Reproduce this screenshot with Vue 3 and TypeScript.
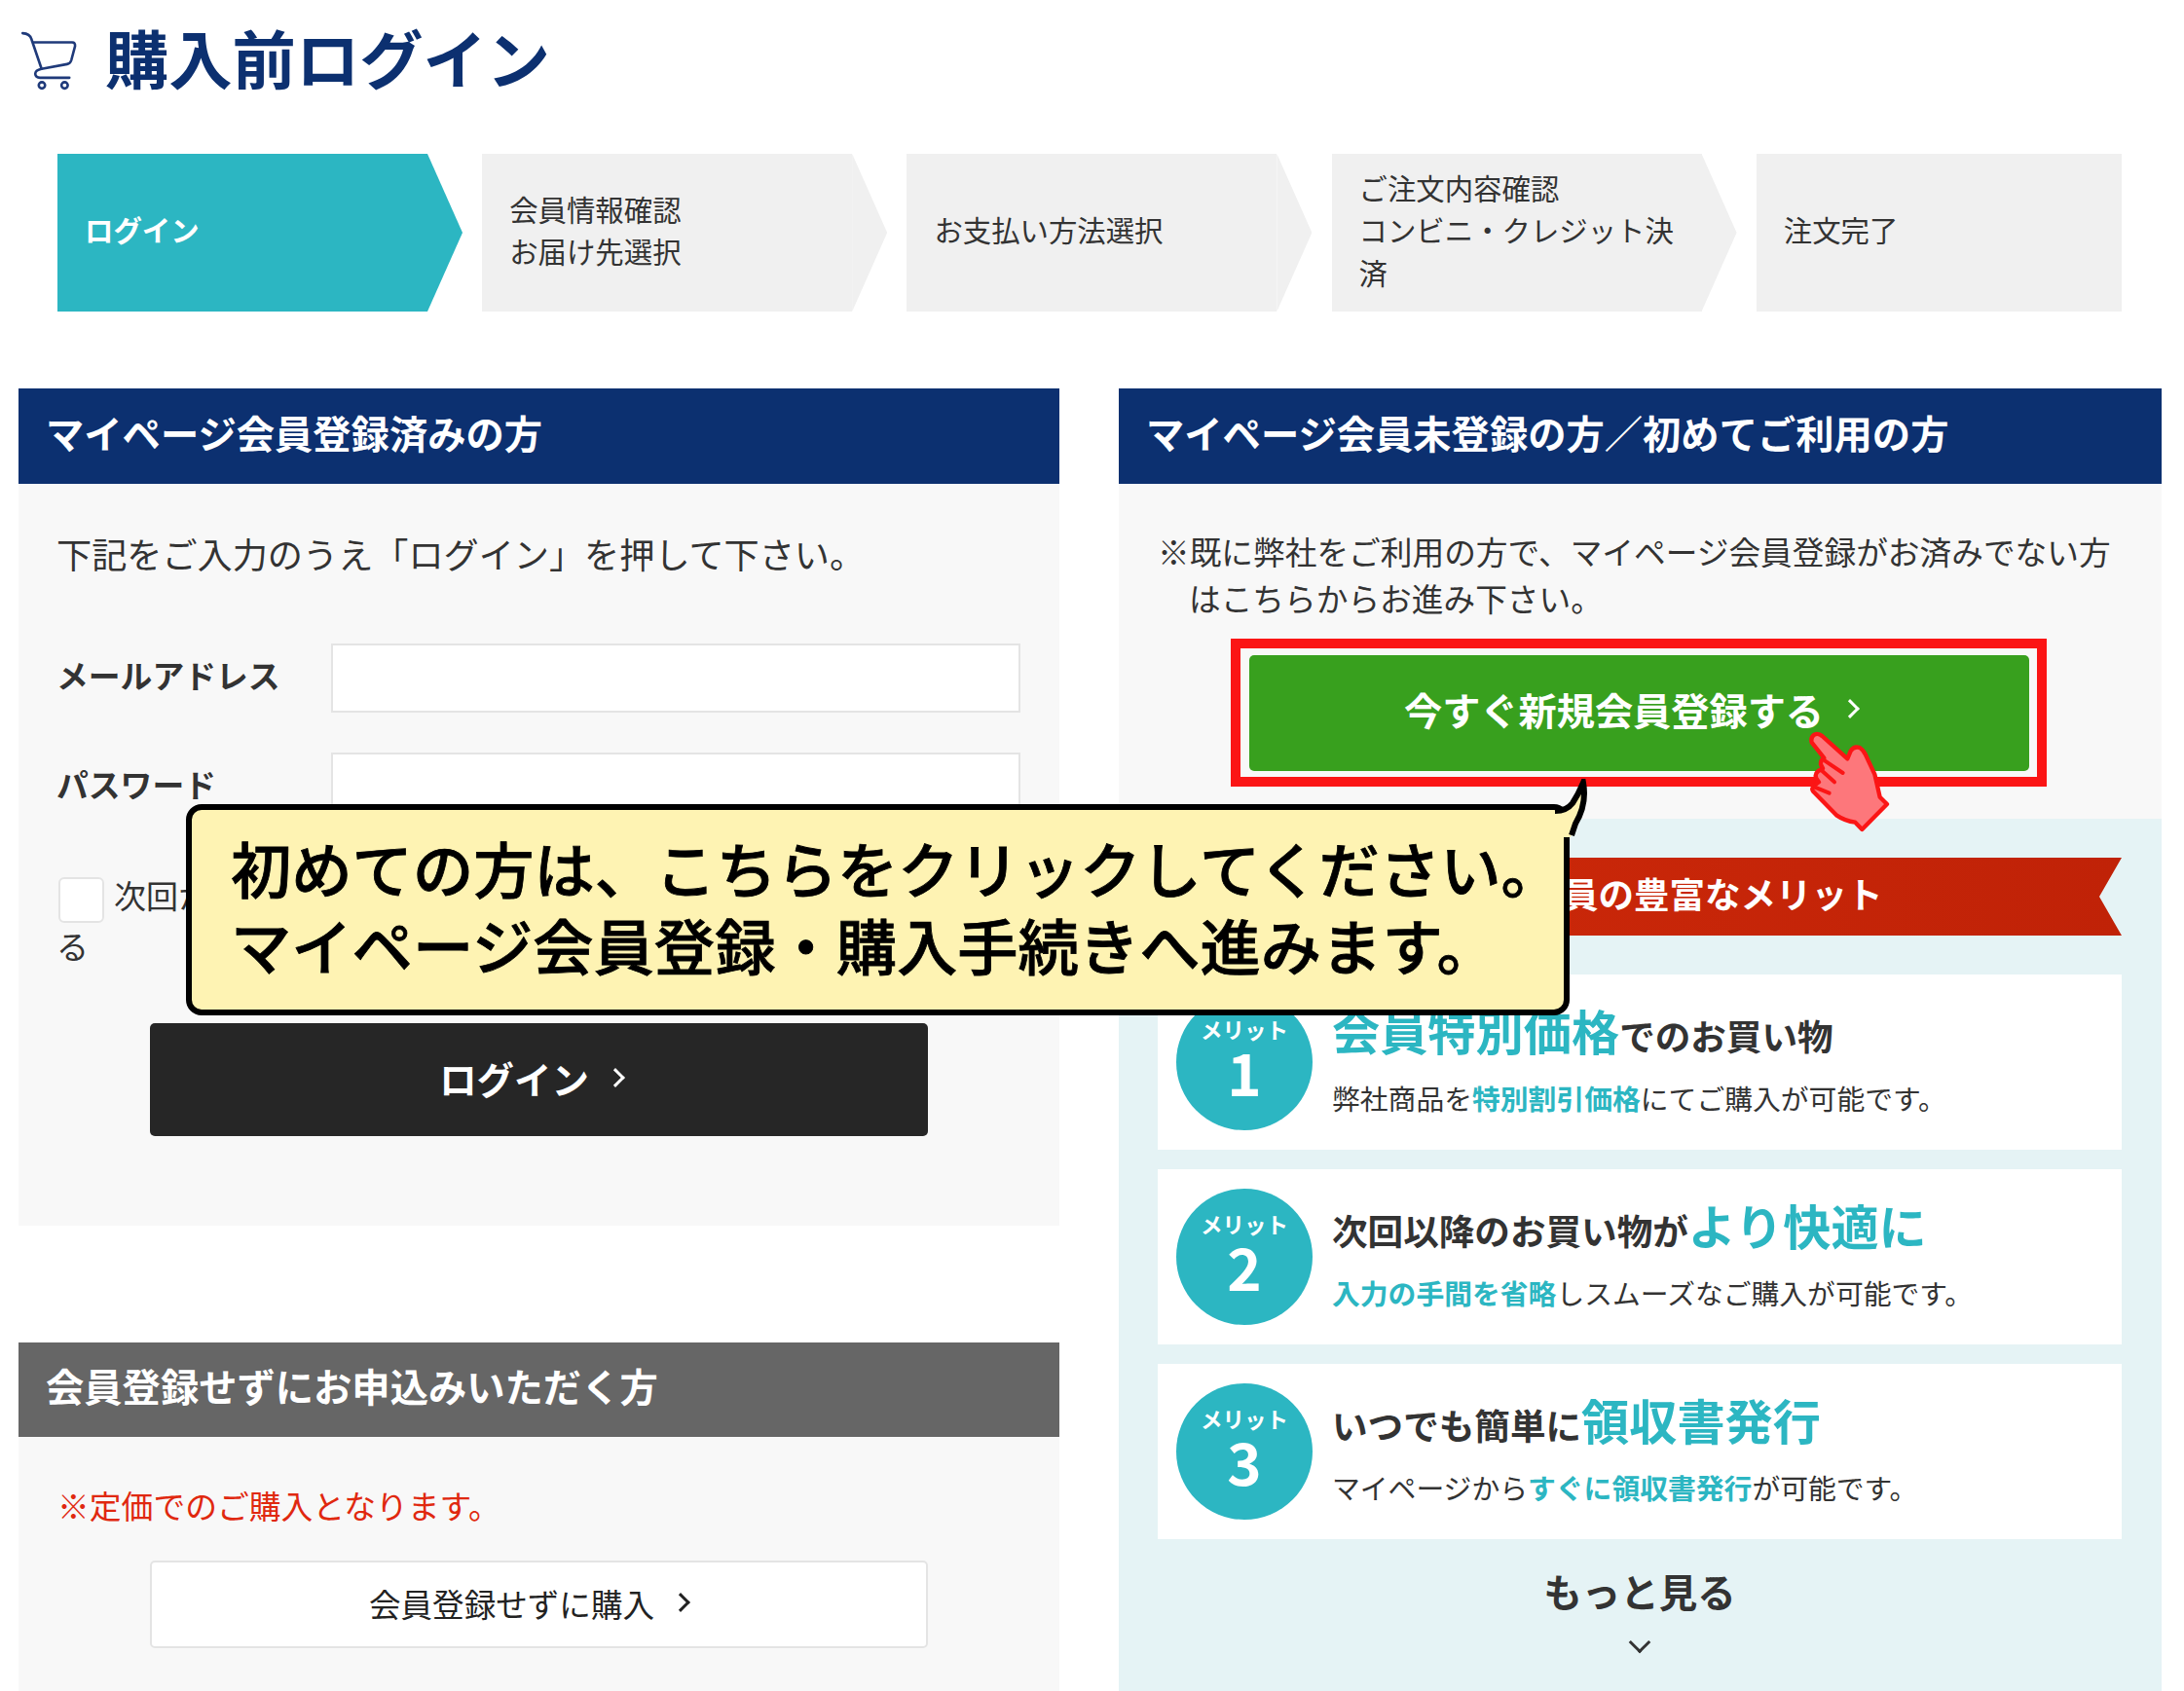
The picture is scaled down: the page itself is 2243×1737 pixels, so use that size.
<template>
  <div class="page">
    <h1 class="page-title">
      <svg class="cart" viewBox="55 60 185 190" width="60" height="62" fill="none" stroke="#1f3a7a" stroke-width="8" stroke-linecap="round" stroke-linejoin="round">
        <path d="M65 69Q88 70 93 88L125 182" />
        <path d="M100 98H222Q232 98 231 110L219 155Q216 165 206 167L125 182Q105 186 105 198Q106 210 120 210H213" />
        <circle cx="126" cy="234" r="10" />
        <circle cx="198" cy="234" r="10" />
      </svg>
      <span class="page-title-text">購入前ログイン</span>
    </h1>

    <ol class="steps">
      <li v-for="(step, i) in steps" :key="i" class="step" :class="{ current: i === 0, last: i === steps.length - 1 }">
        <span class="step-label">{{ step }}</span>
      </li>
    </ol>

    <div class="columns">
      <div class="col">
        <h2 class="panel-head navy">マイページ会員登録済みの方</h2>
        <div class="login-body">
          <p class="lead">下記をご入力のうえ「ログイン」を押して下さい。</p>
          <div class="form-row first">
            <label class="form-label">メールアドレス</label>
            <input class="form-input" type="text" />
          </div>
          <div class="form-row">
            <label class="form-label">パスワード</label>
            <input class="form-input" type="password" />
          </div>
          <div class="remember">
            <span class="check"></span>次回から「メールアドレス」と「パスワード」の入力を省略する
          </div>
          <a class="btn btn-dark">ログイン<i class="chev"></i></a>
        </div>

        <h2 class="panel-head grey">会員登録せずにお申込みいただく方</h2>
        <div class="guest-body">
          <p class="notice">※定価でのご購入となります。</p>
          <a class="btn btn-white">会員登録せずに購入<i class="chev"></i></a>
        </div>
      </div>

      <div class="col">
        <h2 class="panel-head navy">マイページ会員未登録の方／初めてご利用の方</h2>
        <div class="signup-body">
          <p class="signup-note">※既に弊社をご利用の方で、マイページ会員登録がお済みでない方はこちらからお進み下さい。</p>
          <div class="signup-btn-wrap">
            <a class="btn btn-green">今すぐ新規会員登録する<i class="chev"></i></a>
            <span class="red-frame"></span>
            <svg class="hand" viewBox="0 0 600 450" width="200" height="150">
              <path d="M242 128Q238 112 250 104Q262 98 274 108L352 178L362 154Q372 138 390 144Q400 150 408 166L436 226L452 296L474 318L397 396L376 374Q345 370 318 352L246 278Q240 268 250 260L264 250L256 238Q250 226 262 216L276 208L270 196Q268 184 280 176Z" fill="#fd777b" stroke="#fb1515" stroke-width="13" stroke-linejoin="round" />
              <path d="M282 184L338 222M272 214L312 250M252 266L296 284" fill="none" stroke="#fb1515" stroke-width="12" stroke-linecap="round" />
            </svg>
          </div>
        </div>
        <div class="merits">
          <div class="ribbon">マイページ会員の豊富なメリット</div>
          <div v-for="m in merits" :key="m.no" class="merit">
            <div class="merit-badge">
              <span class="merit-badge-label">メリット</span>
              <span class="merit-badge-no">{{ m.no }}</span>
            </div>
            <div class="merit-text">
              <p class="merit-title">
                <span v-for="(s, i) in m.title" :key="i" :class="{ big: s.hl }">{{ s.text }}</span>
              </p>
              <p class="merit-sub">
                <span v-for="(s, i) in m.sub" :key="i" :class="{ strong: s.hl }">{{ s.text }}</span>
              </p>
            </div>
          </div>
          <div class="more">
            <span>もっと見る</span>
            <i class="chev-down"></i>
          </div>
        </div>
      </div>
    </div>

    <div class="callout">
      <p>初めての方は、こちらをクリックしてください。</p>
      <p>マイページ会員登録・購入手続きへ進みます。</p>
      <svg class="callout-tail" viewBox="0 0 40 64" width="40" height="64">
        <path d="M0 34Q12 34 18 26Q24 16 28 4Q32 26 20 48L16 60L0 60Z" fill="#fef3b3" />
        <path d="M0 33Q12 33 18 25Q24 16 29 4Q33 26 21 46L17 58" fill="none" stroke="#000" stroke-width="6" />
      </svg>
    </div>
  </div>
</template>

<script setup lang="ts">
interface Segment {
  text: string
  hl?: boolean
}

interface Merit {
  no: number
  title: Segment[]
  sub: Segment[]
}

const steps: string[] = [
  'ログイン',
  '会員情報確認\nお届け先選択',
  'お支払い方法選択',
  'ご注文内容確認\nコンビニ・クレジット決済',
  '注文完了'
]

const merits: Merit[] = [
  {
    no: 1,
    title: [{ text: '会員特別価格', hl: true }, { text: 'でのお買い物' }],
    sub: [{ text: '弊社商品を' }, { text: '特別割引価格', hl: true }, { text: 'にてご購入が可能です。' }]
  },
  {
    no: 2,
    title: [{ text: '次回以降のお買い物が' }, { text: 'より快適に', hl: true }],
    sub: [{ text: '入力の手間を省略', hl: true }, { text: 'しスムーズなご購入が可能です。' }]
  },
  {
    no: 3,
    title: [{ text: 'いつでも簡単に' }, { text: '領収書発行', hl: true }],
    sub: [{ text: 'マイページから' }, { text: 'すぐに領収書発行', hl: true }, { text: 'が可能です。' }]
  }
]
</script>

<style scoped>
.page {
  position: relative;
  width: 2243px;
  height: 1737px;
  overflow: hidden;
  background: #fff;
  color: #333;
  font-family: "Noto Sans CJK JP", "Noto Sans", sans-serif;
}

p,
h1,
h2,
ol {
  margin: 0;
  padding: 0;
}

.page-title {
  display: flex;
  align-items: center;
  gap: 28px;
  height: 124px;
  padding-left: 20px;
  color: #0c3070;
  font-size: 65.3px;
  line-height: 1;
  font-weight: 700;
}

.page-title-text {
  padding-bottom: 8px;
}

.steps {
  display: grid;
  grid-template-columns: repeat(4, 380px) 375px;
  column-gap: 56.2px;
  margin: 34px 0 0 59px;
  list-style: none;
}

.step {
  position: relative;
  display: flex;
  align-items: center;
  box-sizing: border-box;
  height: 162px;
  padding: 0 25px 6px 28px;
  background: #f0f0f0;
  font-size: 29.4px;
  line-height: 43.5px;
  white-space: pre-line;
}

.step::after {
  content: "";
  position: absolute;
  top: 0;
  left: 100%;
  width: 36px;
  height: 100%;
  background: #f0f0f0;
  clip-path: polygon(0 0, 100% 50%, 0 100%);
}

.step.last::after {
  display: none;
}

.step.current {
  background: #2cb6c2;
  color: #fff;
  font-weight: 700;
}

.step.current::after {
  background: #2cb6c2;
}

.columns {
  display: grid;
  grid-template-columns: 1069px 1071px;
  column-gap: 61px;
  margin: 79px 0 0 19px;
}

.panel-head {
  display: flex;
  align-items: center;
  box-sizing: border-box;
  padding: 0 0 10px 28px;
  color: #fff;
  font-size: 39.3px;
  font-weight: 700;
}

.panel-head.navy {
  height: 98px;
  background: #0c3070;
}

.panel-head.grey {
  height: 97px;
  margin-top: 120px;
  background: #666;
}

.login-body {
  box-sizing: border-box;
  height: 762px;
  padding: 47px 40px 0 39px;
  background: #f8f8f8;
}

.lead {
  font-size: 36.15px;
  line-height: 48px;
}

.form-row {
  display: flex;
  align-items: center;
  margin-top: 41px;
}

.form-row.first {
  margin-top: 69px;
}

.form-label {
  width: 282px;
  padding-bottom: 8px;
  font-size: 32.8px;
  font-weight: 700;
}

.form-input {
  flex: 1;
  height: 71px;
  box-sizing: border-box;
  border: 2px solid #e4e4e4;
  background: #fff;
}

.remember {
  margin-top: 52px;
  font-size: 33px;
  line-height: 46px;
}

.check {
  display: inline-block;
  width: 47px;
  height: 47px;
  box-sizing: border-box;
  margin: 0 10px 0 2px;
  border: 2px solid #e4e4e4;
  border-radius: 6px;
  background: #fff;
  vertical-align: middle;
}

.btn {
  display: flex;
  align-items: center;
  justify-content: center;
  box-sizing: border-box;
  border-radius: 5px;
}

.chev {
  display: inline-block;
  width: 11px;
  height: 11px;
  margin-left: 20px;
  border-top: 3px solid currentColor;
  border-right: 3px solid currentColor;
  transform: rotate(45deg);
}

.btn-dark {
  width: 799px;
  height: 116px;
  margin: 57px 0 0 96px;
  padding: 0 17px 4px 0;
  background: #262626;
  color: #fff;
  font-size: 38.4px;
  font-weight: 700;
}

.guest-body {
  box-sizing: border-box;
  height: 300px;
  padding: 46px 41px 0 40px;
  background: #f8f8f8;
}

.notice {
  color: #e0280f;
  font-size: 32.8px;
  line-height: 48px;
}

.btn-white {
  width: 799px;
  height: 90px;
  margin: 33px 0 0 95px;
  padding: 0 22px 4px 0;
  border: 2px solid #e4e4e4;
  background: #fff;
  color: #222;
  font-size: 32.6px;
}

.signup-body {
  padding: 45px 41px 49px 40px;
  background: #f8f8f8;
}

.signup-note {
  padding-left: 32px;
  text-indent: -32px;
  font-size: 32.7px;
  line-height: 48px;
}

.signup-btn-wrap {
  position: relative;
  width: 801px;
  margin: 35px 0 0 94px;
}

.btn-green {
  height: 119px;
  padding: 0 18px 10px 0;
  background: #38a01e;
  color: #fff;
  font-size: 39.2px;
  font-weight: 700;
}

.red-frame {
  position: absolute;
  top: -17px;
  left: -19px;
  right: -18px;
  bottom: -16px;
  border: 10px solid #fb1515;
}

.hand {
  position: absolute;
  left: 497px;
  top: 47px;
}

.merits {
  box-sizing: border-box;
  height: 896px;
  padding: 40px 41px 0 40px;
  background: #e5f3f5;
}

.ribbon {
  display: flex;
  align-items: center;
  justify-content: center;
  box-sizing: border-box;
  height: 80px;
  margin-bottom: 40px;
  padding: 0 48px 8px 0;
  background: linear-gradient(90deg, #cf2a0a, #c02207);
  clip-path: polygon(0 0, 100% 0, calc(100% - 23px) 50%, 100% 100%, 0 100%);
  color: #fff;
  font-size: 36.5px;
  font-weight: 700;
}

.merit {
  display: flex;
  align-items: center;
  height: 180px;
  margin-bottom: 20px;
  padding-left: 19px;
  background: #fff;
}

.merit-badge {
  display: flex;
  flex-direction: column;
  align-items: center;
  flex-shrink: 0;
  width: 140px;
  height: 140px;
  border-radius: 50%;
  background: #2cb6c2;
  color: #fff;
  font-weight: 700;
}

.merit-badge-label {
  margin-top: 18px;
  font-size: 22.5px;
  line-height: 36px;
}

.merit-badge-no {
  margin-top: -8px;
  font-size: 60px;
  line-height: 66px;
}

.merit-text {
  margin-left: 20px;
  padding-bottom: 5px;
}

.merit-title {
  font-size: 36.6px;
  line-height: 60px;
  font-weight: 700;
}

.big {
  color: #2cb6c2;
  font-size: 49.2px;
}

.merit-sub {
  margin-top: 13px;
  font-size: 28.8px;
  line-height: 42px;
}

.strong {
  color: #2cb6c2;
  font-weight: 700;
}

.more {
  display: flex;
  flex-direction: column;
  align-items: center;
  margin-top: 25px;
  font-size: 39.5px;
  line-height: 56px;
  font-weight: 700;
}

.chev-down {
  width: 13px;
  height: 13px;
  margin-top: 17px;
  border-right: 3px solid #333;
  border-bottom: 3px solid #333;
  transform: rotate(45deg);
}

.callout {
  position: absolute;
  left: 191px;
  top: 826px;
  box-sizing: border-box;
  width: 1421px;
  height: 217px;
  padding: 20px 0 0 40px;
  border: 6px solid #000;
  border-radius: 16px;
  background: #fef3b3;
  color: #000;
  font-size: 62.3px;
  line-height: 79px;
  font-weight: 500;
  -webkit-text-stroke: 0.8px #000;
  white-space: nowrap;
}

.callout-tail {
  position: absolute;
  top: -32px;
  right: -31px;
}
</style>

<style>
html,
body {
  margin: 0;
  background: #fff;
}
</style>
